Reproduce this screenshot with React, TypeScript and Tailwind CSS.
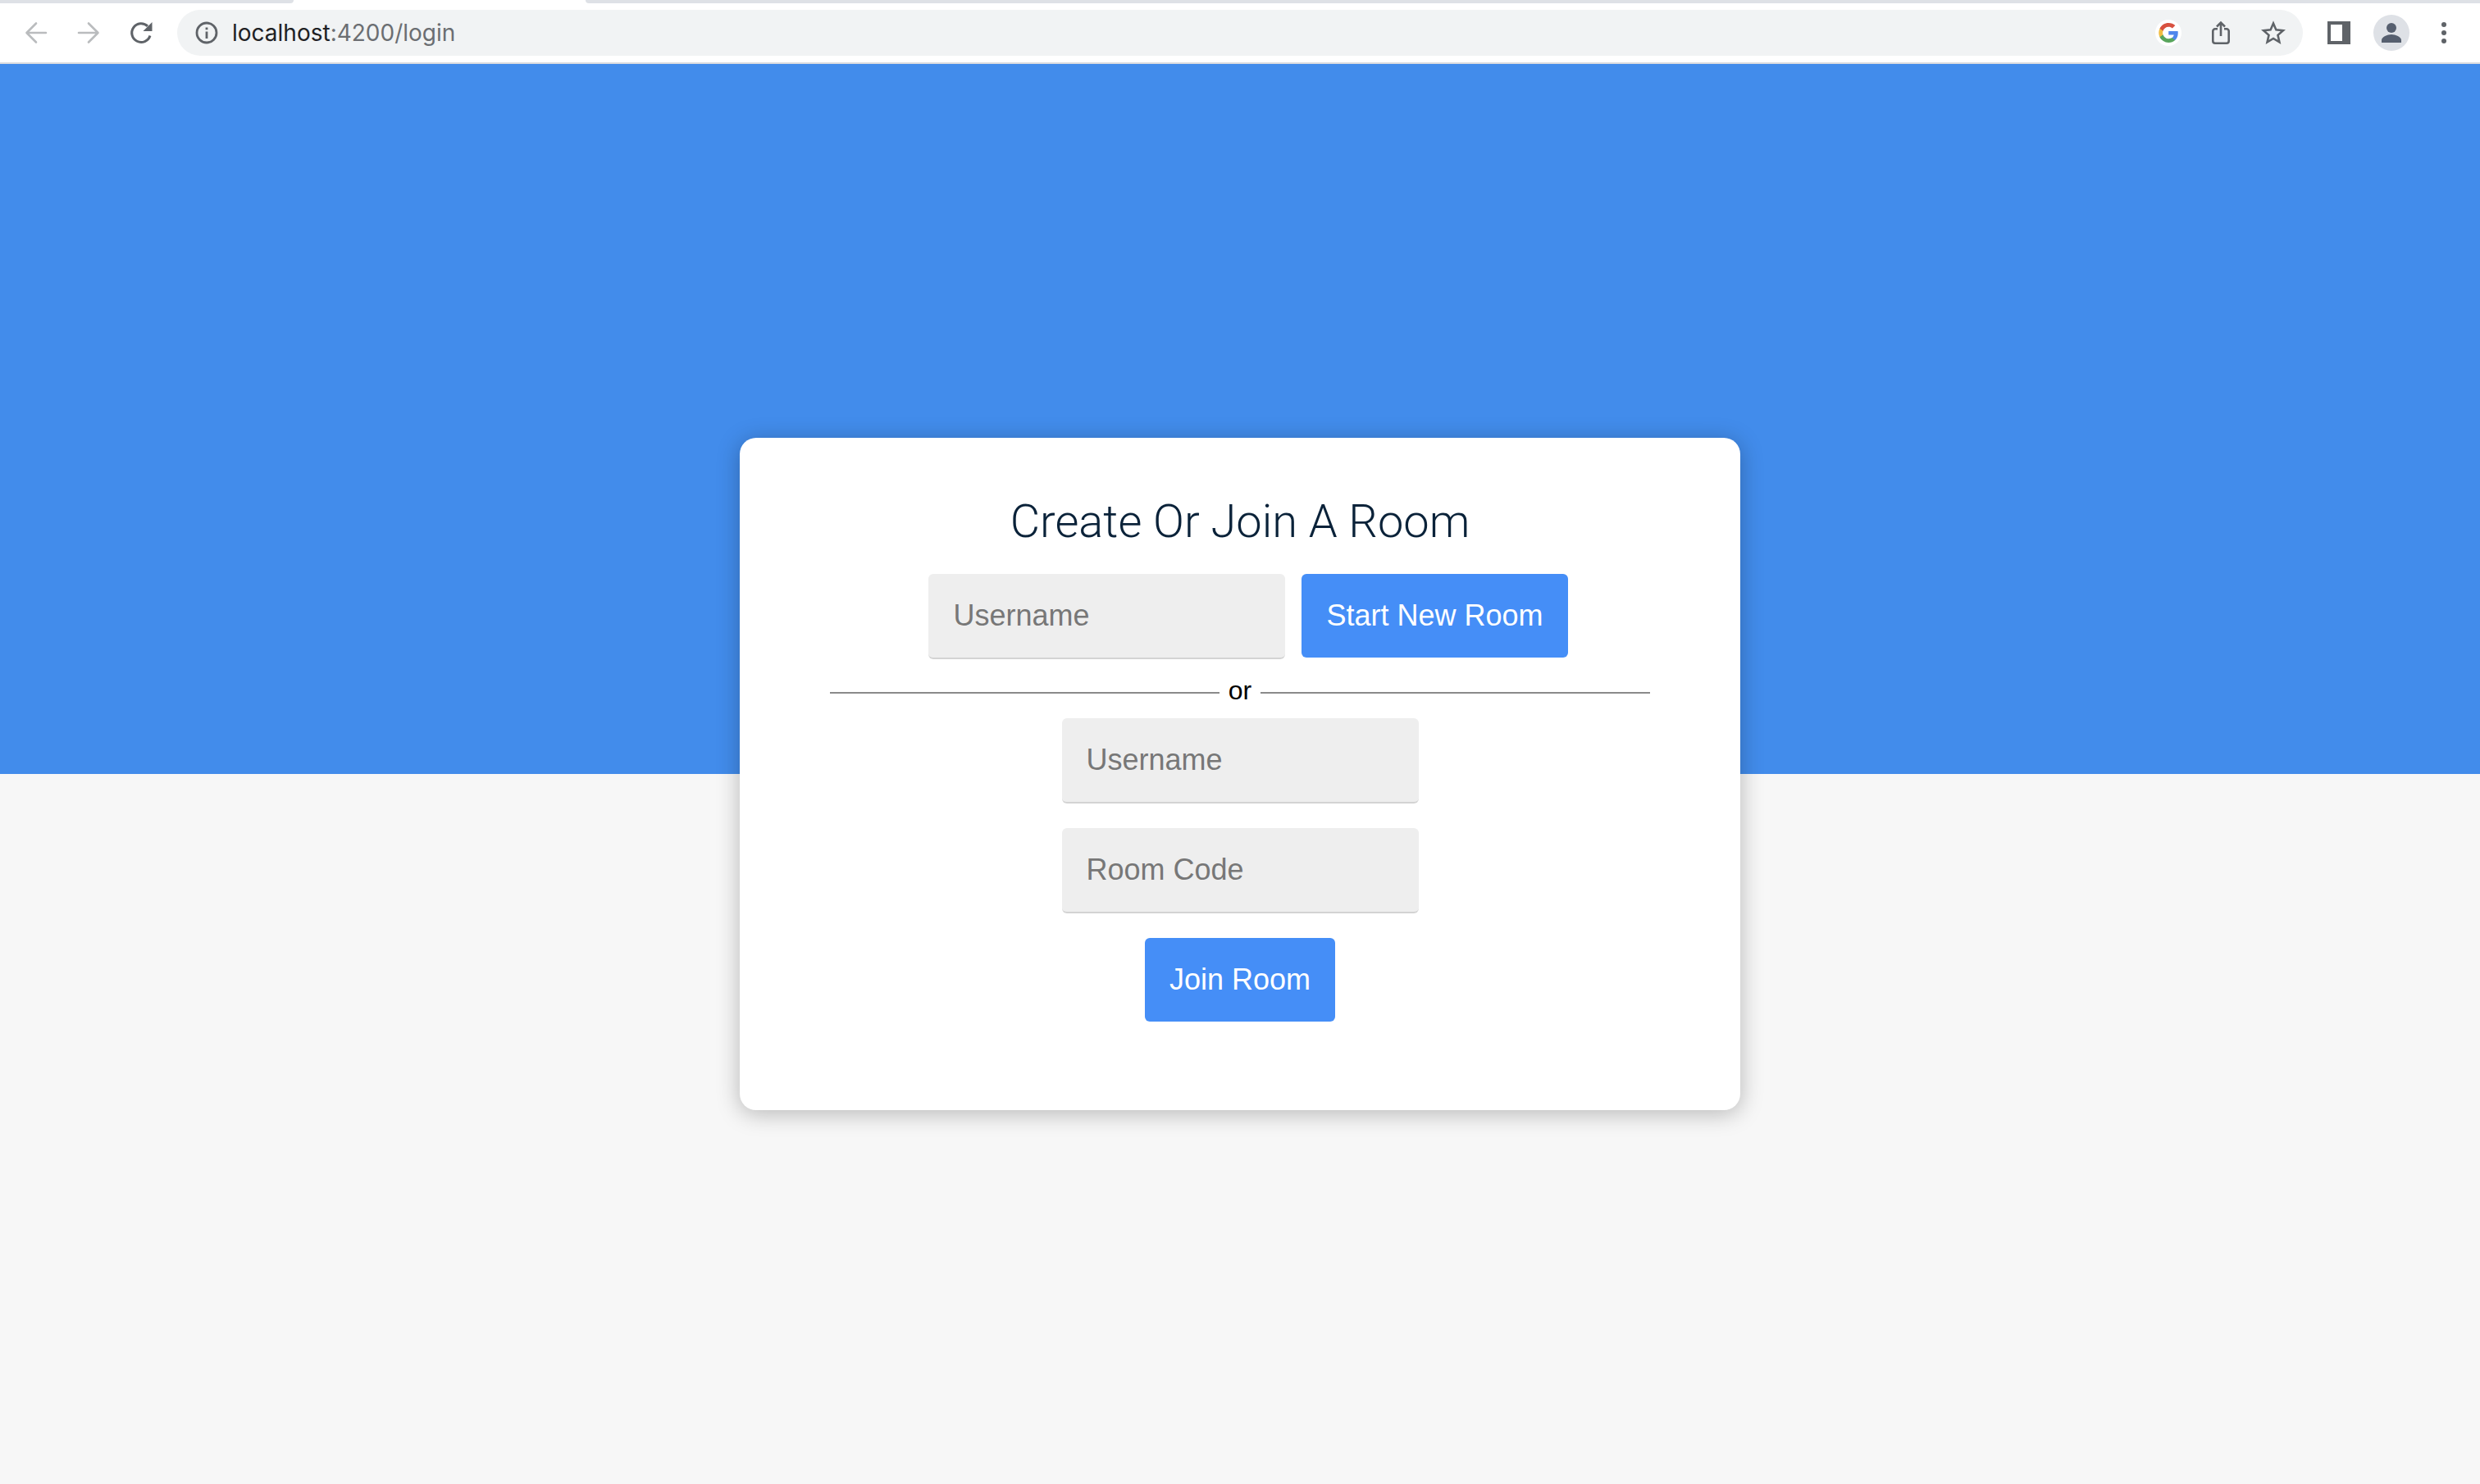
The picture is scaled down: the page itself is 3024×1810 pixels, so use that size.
import React from "react";

const toolButton = "flex size-8 items-center justify-center";
const field =
  "h-[104px] w-[435px] rounded-[6px] border-b-2 border-[#d3d3d3] bg-[#eeeeee] px-[30px] text-[36px] leading-[42px] text-gray-800 outline-none placeholder:text-[#777777]";
const action =
  "h-[102px] rounded-[6px] bg-[#458ef7] px-[30px] text-[36px] leading-[42px] text-white";

function BackIcon() {
  return (
    <svg width="32" height="32" viewBox="0 0 32 32" fill="none" stroke="#babcbe" strokeWidth="2.6" strokeLinecap="round" strokeLinejoin="round">
      <path d="M28 16H5M16 4.5 4.5 16 16 27.5" />
    </svg>
  );
}

function ForwardIcon() {
  return (
    <svg width="32" height="32" viewBox="0 0 32 32" fill="none" stroke="#babcbe" strokeWidth="2.6" strokeLinecap="round" strokeLinejoin="round">
      <path d="M4 16h23M16 4.5 27.5 16 16 27.5" />
    </svg>
  );
}

function ReloadIcon() {
  return (
    <svg width="32" height="32" viewBox="0 0 32 32">
      <path d="M27 19.5A11.4 11.4 0 1 1 24 7.8" fill="none" stroke="#5f6368" strokeWidth="3" />
      <path d="M29.5 3v11h-11z" fill="#5f6368" />
    </svg>
  );
}

function InfoIcon() {
  return (
    <svg width="28" height="28" viewBox="0 0 28 28">
      <circle cx="14" cy="14" r="12" fill="none" stroke="#5f6368" strokeWidth="2.8" />
      <path d="M12.6 12.6h2.8V21h-2.8zM12.6 7.4h2.8v2.8h-2.8z" fill="#5f6368" />
    </svg>
  );
}

function GoogleIcon() {
  return (
    <svg width="24" height="24" viewBox="0 0 48 48">
      <path fill="#4f86ec" d="M47.5 24.5c0-1.6-.1-3.1-.4-4.5H24.500v9H37.500c-.6 3-2.300 5.500-4.800 7.200v6h7.700c4.500-4.200 7.100-10.300 7.100-17.700z" />
      <path fill="#58a55c" d="M24.500 48c6.500 0 11.900-2.100 15.900-5.800l-7.700-6c-2.200 1.400-4.900 2.300-8.200 2.300-6.300 0-11.600-4.200-13.500-10H3v6.200C7 42.600 15.100 48 24.500 48z" />
      <path fill="#f1bd42" d="M11 28.500c-.5-1.400-.8-3-.8-4.500s.3-3.100.8-4.500v-6.200H3C1.400 16.500.5 20.100.5 24S1.400 31.500 3 34.700z" />
      <path fill="#d85140" d="M24.500 9.500c3.600 0 6.800 1.200 9.300 3.600l6.900-6.900C36.500 2.400 31 0 24.500 0 15.100 0 7 5.400 3 13.300l8 6.200c1.900-5.800 7.200-10 13.500-10z" />
    </svg>
  );
}

function ShareIcon() {
  return (
    <svg width="32" height="32" viewBox="0 0 32 32" fill="none" stroke="#5f6368" strokeWidth="2.6">
      <path d="M12 11.300H9a2.700 2.700 0 0 0-2.700 2.700v12A2.700 2.700 0 0 0 9 28.700h14a2.700 2.700 0 0 0 2.700-2.700V14a2.700 2.700 0 0 0-2.700-2.700h-3" />
      <path d="M16 20V4M11 8.500l5-5 5 5" />
    </svg>
  );
}

function StarIcon() {
  return (
    <svg width="32" height="32" viewBox="0 0 32 32">
      <path
        d="m16 4.500 3.400 7.900 8.500.8-6.400 5.700 1.900 8.400L16 22.900l-7.400 4.400 1.900-8.400-6.400-5.700 8.500-.8z"
        fill="none"
        stroke="#5f6368"
        strokeWidth="2.6"
      />
    </svg>
  );
}

function SidePanelIcon() {
  return (
    <svg width="28" height="28" viewBox="0 0 28 28">
      <path fillRule="evenodd" d="M0 0h28v28H0zM4 4v20h14V4z" fill="#5f6368" />
    </svg>
  );
}

function PersonIcon() {
  return (
    <svg width="24" height="24" viewBox="0 0 24 24" fill="#565f6f">
      <circle cx="12" cy="6" r="6" />
      <path d="M0 24v-3c0-4 7-7 12-7s12 3 12 7v3z" />
    </svg>
  );
}

function MoreIcon() {
  return (
    <svg width="32" height="32" viewBox="0 0 32 32" fill="#5f6368">
      <circle cx="16" cy="6" r="3" />
      <circle cx="16" cy="16" r="3" />
      <circle cx="16" cy="26" r="3" />
    </svg>
  );
}

function BrowserBar() {
  return (
    <header className="border-b-2 border-[#dadce0] bg-white font-[Inter,sans-serif]">
      <div className="flex h-1">
        <div className="w-[358px] rounded-br-[8px] bg-[#dee1e6]" />
        <div className="w-[356px]" />
        <div className="flex-1 rounded-bl-[8px] bg-[#dee1e6]" />
      </div>
      <div className="flex h-[72px] items-center pr-7">
        <div className="flex w-[216px] gap-8 pl-7">
          <button className={toolButton} aria-label="Back"><BackIcon /></button>
          <button className={toolButton} aria-label="Forward"><ForwardIcon /></button>
          <button className={toolButton} aria-label="Reload"><ReloadIcon /></button>
        </div>
        <div className="flex h-14 flex-1 items-center rounded-full bg-[#f1f3f4] pr-5 pl-[22px]">
          <button aria-label="View site information"><InfoIcon /></button>
          <div
            role="textbox"
            aria-label="Address"
            contentEditable
            suppressContentEditableWarning
            className="ml-[17px] flex-1 text-[28px] leading-8 text-[#6b6e72] outline-none"
          >
            <span className="text-[#202124]">localhost</span>:4200/login
          </div>
          <div className="flex gap-8">
            <button className="flex size-8 items-center justify-center rounded-full bg-white" aria-label="Search with Google"><GoogleIcon /></button>
            <button className={toolButton} aria-label="Share"><ShareIcon /></button>
            <button className={toolButton} aria-label="Bookmark"><StarIcon /></button>
          </div>
        </div>
        <div className="ml-7 flex items-center">
          <button className={toolButton} aria-label="Side panel"><SidePanelIcon /></button>
          <button className="mx-[26px] flex size-11 items-center justify-center rounded-full bg-[#dee1e6]" aria-label="Profile"><PersonIcon /></button>
          <button className={toolButton} aria-label="More"><MoreIcon /></button>
        </div>
      </div>
    </header>
  );
}

export default function App() {
  return (
    <div className="flex min-h-screen flex-col">
      <BrowserBar />
      <main className="flex flex-1 items-center justify-center bg-[linear-gradient(#428ceb_50%,#f7f7f7_50%)] font-['Liberation_Sans',Arial,sans-serif]">
        <section className="flex w-full max-w-[1220px] flex-col items-center rounded-[20px] bg-white px-[110px] pt-[68px] pb-[108px] shadow-[0_4px_28px_rgba(0,0,0,0.27)]">
          <h1 className="mb-[30px] font-[Roboto,sans-serif] text-[56px] leading-[68px] font-light text-[#0a2239]">
            Create Or Join A Room
          </h1>
          <form className="flex items-start gap-5 pl-5" onSubmit={(e) => e.preventDefault()}>
            <input className={field} type="text" placeholder="Username" aria-label="Username" />
            <button className={action} type="submit">Start New Room</button>
          </form>
          <div className="mt-5 mb-[10px] flex w-full items-center gap-[11px]">
            <div className="h-[2px] flex-1 bg-[#8a8a8a]" />
            <span className="pb-[6px] text-[32px] leading-[36px] text-black">or</span>
            <div className="h-[2px] flex-1 bg-[#8a8a8a]" />
          </div>
          <form className="flex flex-col items-center gap-[30px]" onSubmit={(e) => e.preventDefault()}>
            <input className={field} type="text" placeholder="Username" aria-label="Username to join with" />
            <input className={field} type="text" placeholder="Room Code" aria-label="Room Code" />
            <button className={action} type="submit">Join Room</button>
          </form>
        </section>
      </main>
    </div>
  );
}
